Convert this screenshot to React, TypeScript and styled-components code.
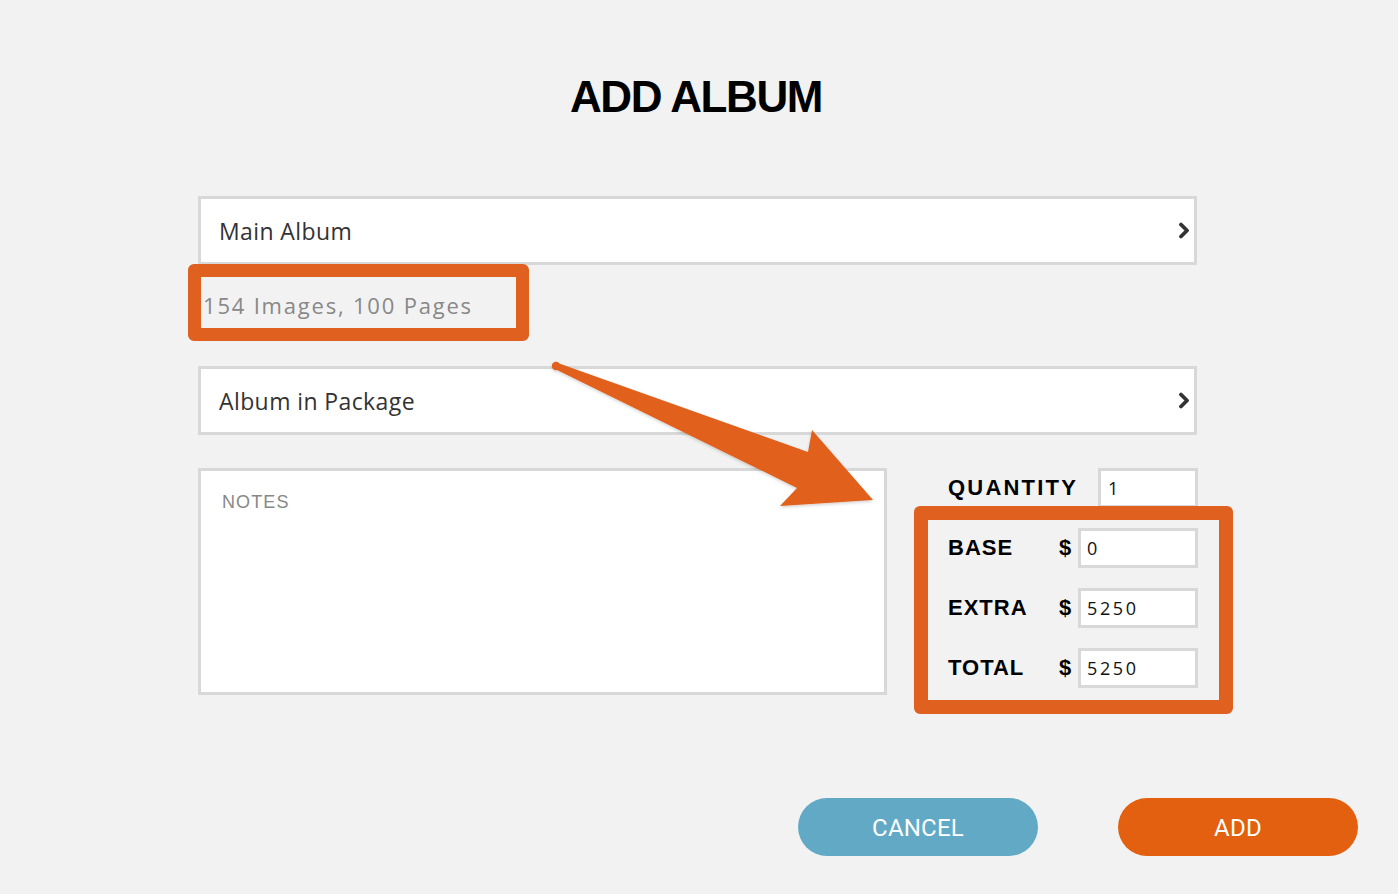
import React from "react";
import styled, { createGlobalStyle } from "styled-components";

const Global = createGlobalStyle`
  html, body { margin: 0; padding: 0; background: #f2f2f2; }
  body { font-family: "Open Sans", "Liberation Sans", sans-serif; }
  * { box-sizing: border-box; }
`;

const Page = styled.div`
  position: relative;
  width: 1398px;
  height: 894px;
  padding-top: 75px;
  background: #f2f2f2;
  overflow: hidden;
`;

const Title = styled.h1`
  margin: 0;
  padding-right: 6px;
  text-align: center;
  font-family: "Liberation Sans", Arial, sans-serif;
  font-weight: 700;
  font-size: 44px;
  line-height: 44px;
  letter-spacing: -1.4px;
  color: #000;
`;

const Form = styled.div`
  width: 999px;
  margin: 77px 0 0 198px;
  display: flex;
  flex-direction: column;
`;

const SelectRow = styled.div<{ $top?: number }>`
  height: 69px;
  margin-top: ${(p) => p.$top ?? 0}px;
  display: flex;
  align-items: center;
  justify-content: space-between;
  padding: 0 4px 0 18px;
  background: #fff;
  border: 3px solid #d8d8d8;
  font-size: 23px;
  color: #333;
  letter-spacing: 0.4px;
`;

const Highlight = styled.div`
  width: 341px;
  height: 77px;
  margin: -1px 0 0 -10px;
  border: 13px solid #e0601f;
  border-radius: 6px;
  display: flex;
  align-items: center;
  padding: 4px 0 0 2px;
  font-size: 22px;
  color: #888;
  letter-spacing: 1.8px;
`;

const Bottom = styled.div`
  margin-top: 33px;
  display: flex;
  align-items: flex-start;
  gap: 27px;
`;

const Notes = styled.div`
  flex: 0 0 689px;
  height: 227px;
  background: #fff;
  border: 3px solid #d8d8d8;
  padding: 21px 0 0 21px;
  font-family: "Liberation Sans", Arial, sans-serif;
  font-size: 18px;
  letter-spacing: 1.1px;
  color: #888;
`;

const Side = styled.div`
  flex: 0 0 319px;
  display: flex;
  flex-direction: column;
`;

const QtyRow = styled.div`
  display: flex;
  align-items: center;
  justify-content: space-between;
  padding: 0 35px 0 34px;
`;

const Label = styled.span<{ $spacing?: number }>`
  font-family: "Liberation Sans", Arial, sans-serif;
  font-weight: 700;
  font-size: 22px;
  letter-spacing: ${(p) => p.$spacing ?? 1}px;
  color: #000;
`;

const Field = styled.div<{ $w: number; $pad?: number }>`
  width: ${(p) => p.$w}px;
  height: 40px;
  background: #fff;
  border: 3px solid #d8d8d8;
  display: flex;
  align-items: center;
  padding-left: ${(p) => p.$pad ?? 6}px;
  font-size: 18px;
  letter-spacing: 2.6px;
  color: #111;
`;

const PriceBox = styled.div`
  margin-top: -2px;
  border: 14px solid #e0601f;
  border-radius: 6px;
  padding: 8px 21px 12px 20px;
  display: flex;
  flex-direction: column;
  gap: 20px;
`;

const PriceRow = styled.div`
  display: grid;
  grid-template-columns: 111px 19px 120px;
  align-items: center;
`;

const Dollar = styled.span`
  font-family: "Liberation Sans", Arial, sans-serif;
  font-weight: 700;
  font-size: 22px;
  color: #000;
`;

const Buttons = styled.div`
  margin-top: 84px;
  display: flex;
  justify-content: flex-end;
  gap: 80px;
  padding-right: 40px;
`;

const Button = styled.button<{ $color: string }>`
  width: 240px;
  height: 58px;
  border: none;
  border-radius: 29px;
  background: ${(p) => p.$color};
  color: #fff;
  font-family: Roboto, "Liberation Sans", sans-serif;
  font-size: 24px;
  font-weight: 400;
  padding: 2px 0 0;
  letter-spacing: 0.2px;
  cursor: pointer;
`;

const Arrow = styled.svg`
  position: absolute;
  left: 550px;
  top: 355px;
  width: 330px;
  height: 160px;
  pointer-events: none;
  overflow: visible;
`;

const Chevron = () => (
  <svg width="12" height="17" viewBox="0 0 12 17">
    <polyline
      points="3,2.5 9,8.5 3,14.5"
      fill="none"
      stroke="#333"
      strokeWidth="3.8"
      strokeLinejoin="round"
      strokeLinecap="round"
    />
  </svg>
);

export default function App() {
  return (
    <>
      <Global />
      <Page>
        <Title>ADD ALBUM</Title>
        <Form>
          <SelectRow>
            <span>Main Album</span>
            <Chevron />
          </SelectRow>
          <Highlight>154 Images, 100 Pages</Highlight>
          <SelectRow $top={25}>
            <span>Album in Package</span>
            <Chevron />
          </SelectRow>
          <Bottom>
            <Notes>NOTES</Notes>
            <Side>
              <QtyRow>
                <Label $spacing={2.2}>QUANTITY</Label>
                <Field $w={100} $pad={7}>1</Field>
              </QtyRow>
              <PriceBox>
                <PriceRow>
                  <Label>BASE</Label>
                  <Dollar>$</Dollar>
                  <Field $w={120}>0</Field>
                </PriceRow>
                <PriceRow>
                  <Label>EXTRA</Label>
                  <Dollar>$</Dollar>
                  <Field $w={120}>5250</Field>
                </PriceRow>
                <PriceRow>
                  <Label>TOTAL</Label>
                  <Dollar>$</Dollar>
                  <Field $w={120}>5250</Field>
                </PriceRow>
              </PriceBox>
            </Side>
          </Bottom>
        </Form>
        <Buttons>
          <Button $color="#62a9c5">CANCEL</Button>
          <Button $color="#e2600f">ADD</Button>
        </Buttons>
        <Arrow viewBox="0 0 330 160">
          <defs>
            <filter id="sh" x="-10%" y="-10%" width="120%" height="130%">
              <feDropShadow dx="0" dy="1.5" stdDeviation="1.5" floodColor="#000" floodOpacity="0.18" />
            </filter>
          </defs>
          <g filter="url(#sh)" fill="#e0601f">
            <polygon points="5,7 258,97 262,75 323,145 230,151 247,133 7,15" />
            <circle cx="6" cy="11" r="4.2" />
          </g>
        </Arrow>
      </Page>
    </>
  );
}
